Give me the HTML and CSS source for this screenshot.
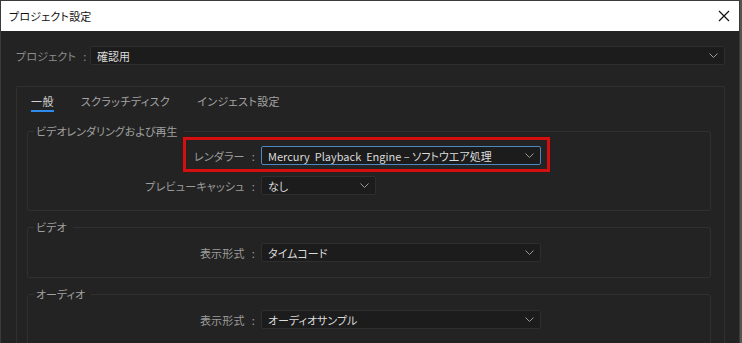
FILE: index.html
```html
<!DOCTYPE html>
<html lang="ja">
<head>
    <meta charset="UTF-8">
    <title>プロジェクト設定</title>
    <link rel="stylesheet" href="styles.css">
</head>
<body>
    <div class="window">
        <div class="titlebar">
            <span class="title">プロジェクト設定</span>
            <svg class="close" width="12" height="12" viewBox="0 0 12 12">
                <path d="M1 1 L11 11 M11 1 L1 11" stroke="#111" stroke-width="1.2" fill="none"/>
            </svg>
        </div>

        <div class="content">
            <div class="project-row">
                <span class="label">プロジェクト<span class="colon">:</span></span>
                <div class="select wide">
                    <span>確認用</span>
                    <svg class="chevron" width="9" height="5" viewBox="0 0 9 5"><path d="M0.5 0.5 L4.5 4.5 L8.5 0.5" stroke="#9a9a9a" fill="none"/></svg>
                </div>
            </div>

            <div class="panel">
                <div class="tabs">
                    <span class="tab active">一般</span>
                    <span class="tab">スクラッチディスク</span>
                    <span class="tab">インジェスト設定</span>
                </div>

                <!-- rendering -->
                <fieldset class="group">
                    <legend>ビデオレンダリングおよび再生</legend>
                    <div class="row highlight">
                        <span class="label">レンダラー<span class="colon">:</span></span>
                        <div class="select medium focused">
                            <span>Mercury&nbsp; Playback&nbsp; Engine – ソフトウエア処理</span>
                            <svg class="chevron" width="9" height="5" viewBox="0 0 9 5"><path d="M0.5 0.5 L4.5 4.5 L8.5 0.5" stroke="#9a9a9a" fill="none"/></svg>
                        </div>
                    </div>
                    <div class="row">
                        <span class="label">プレビューキャッシュ<span class="colon">:</span></span>
                        <div class="select small">
                            <span>なし</span>
                            <svg class="chevron" width="9" height="5" viewBox="0 0 9 5"><path d="M0.5 0.5 L4.5 4.5 L8.5 0.5" stroke="#9a9a9a" fill="none"/></svg>
                        </div>
                    </div>
                </fieldset>

                <fieldset class="group">
                    <legend>ビデオ</legend>
                    <div class="row">
                        <span class="label">表示形式<span class="colon">:</span></span>
                        <div class="select medium">
                            <span>タイムコード</span>
                            <svg class="chevron" width="9" height="5" viewBox="0 0 9 5"><path d="M0.5 0.5 L4.5 4.5 L8.5 0.5" stroke="#9a9a9a" fill="none"/></svg>
                        </div>
                    </div>
                </fieldset>

                <fieldset class="group">
                    <legend>オーディオ</legend>
                    <div class="row">
                        <span class="label">表示形式<span class="colon">:</span></span>
                        <div class="select medium">
                            <span>オーディオサンプル</span>
                            <svg class="chevron" width="9" height="5" viewBox="0 0 9 5"><path d="M0.5 0.5 L4.5 4.5 L8.5 0.5" stroke="#9a9a9a" fill="none"/></svg>
                        </div>
                    </div>
                    <div class="row">
                        <span class="label">&nbsp;</span>
                    </div>
                </fieldset>
            </div>
        </div>
    </div>
</body>
</html>
```

FILE: styles.css
```css
* {
    box-sizing: border-box;
    margin: 0;
    padding: 0;
}

body {
    width: 742px;
    height: 343px;
    overflow: hidden;
    background: #55564a;
    font-family: "Noto Sans CJK JP", "Noto Sans", sans-serif;
    font-size: 11px;
    font-feature-settings: "palt";
}

/* Window */
.window {
    width: 740px;
    height: 343px;
    border: 1px solid #3a3a3a;
    border-bottom: none;
    background: #232323;
    display: flex;
    flex-direction: column;
    overflow: hidden;
}

.titlebar {
    height: 30px;
    background: #ffffff;
    display: flex;
    align-items: center;
    justify-content: space-between;
    padding: 0 9px 0 8px;
    flex-shrink: 0;
}

.title {
    font-size: 11px;
    letter-spacing: 0.2px;
    color: #111;
}

/* Project row */
.content {
    flex: 1;
    padding: 15px 14px 0 15px;
}

.project-row {
    display: flex;
    align-items: center;
    height: 19px;
}

.project-row .label {
    width: 74px;
    color: #8c8c8c;
}

.label {
    color: #9c9c9c;
    white-space: nowrap;
    letter-spacing: 0.2px;
}

.colon {
    margin-left: 7px;
}

/* Select boxes */
.select {
    height: 19px;
    background: #1c1c1c;
    border: 1px solid #2e2e2e;
    border-radius: 2px;
    display: flex;
    align-items: center;
    justify-content: space-between;
    padding: 0 6px 0 6px;
    color: #dadada;
    white-space: nowrap;
}

.select.wide { flex: 1; }
.select.medium { width: 280px; }
.select.small { width: 115px; }

.select.focused {
    border-color: #4f87c3;
}

.chevron {
    flex-shrink: 0;
}

/* Panel and tabs */
.panel {
    margin-top: 21px;
    border: 1px solid #303030;
    border-bottom: none;
    border-radius: 2px 2px 0 0;
    height: 300px;
    padding: 6px 13px 0 10px;
}

.tabs {
    display: flex;
    gap: 27px;
    padding-left: 4px;
    height: 26px;
}

.tab {
    color: #a4a4a4;
    line-height: 17px;
    height: 19px;
    letter-spacing: 0.4px;
}

.tab.active {
    color: #cfcfcf;
    border-bottom: 2px solid #2d8ceb;
}

/* Groups */
.group {
    border: 1px solid #303030;
    border-radius: 2px;
    padding: 6px 0 15px 0;
    margin-top: 4px;
    margin-bottom: 8px;
}

.group + .group {
    padding-top: 7px;
}

.group legend {
    color: #a0a0a0;
    padding: 0 6px 0 2px;
    margin-left: 6px;
    line-height: 17px;
}

.row {
    display: grid;
    grid-template-columns: 227px auto;
    column-gap: 6px;
    align-items: center;
    margin-top: 11px;
    justify-items: start;
}

.row:first-of-type {
    margin-top: 0;
}

.row .label {
    justify-self: end;
}

/* Red highlight frame around the renderer row */
.highlight {
    position: relative;
    width: 513px;
}

.highlight::after {
    content: "";
    box-sizing: border-box;
    position: absolute;
    left: 155px;
    top: -9px;
    width: 367px;
    height: 35px;
    border: 3px solid #d40f0f;
    box-shadow: 0 0 1px #600;
}
```
